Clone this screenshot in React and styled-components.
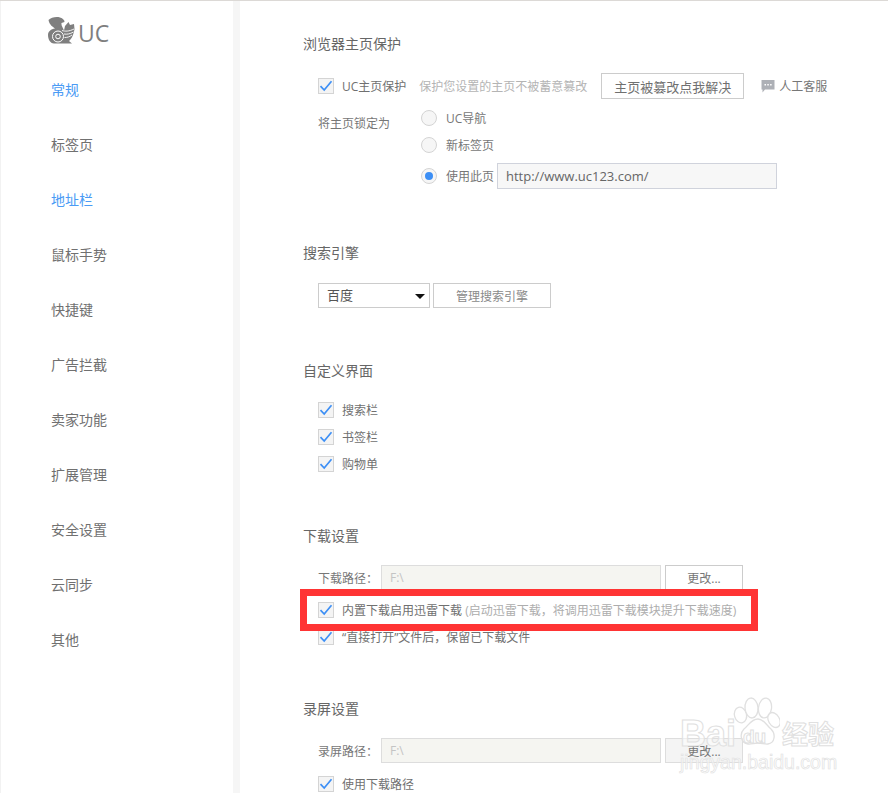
import React from 'react';
import styled, { createGlobalStyle } from 'styled-components';

const NAV = [
  { label: '常规', active: true },
  { label: '标签页' },
  { label: '地址栏', active: true },
  { label: '鼠标手势' },
  { label: '快捷键' },
  { label: '广告拦截' },
  { label: '卖家功能' },
  { label: '扩展管理' },
  { label: '安全设置' },
  { label: '云同步' },
  { label: '其他' },
];

function Squirrel() {
  return (
    <svg width="27" height="27" viewBox="0 0 27 27" fill="#7f7f7f">
      <path d="M0.500 3C3 0.500 8-0.500 12 0.500C15 1.500 16.500 3 16.500 5L13.500 6C13 8.500 15 11 16 13.500L17 9L20.500 5L22 8L26 7L26.500 12C26 16 24 22 21 24L24 26.500L6 26.500C2 26.500 0 22 0 18C0 14.500 3 12 7 11.500C4.500 9.500 1.500 8 0.500 3z" />
      <circle cx="10" cy="19.500" r="5.500" fill="none" stroke="#fff" strokeWidth="1" />
      <circle cx="10" cy="19.500" r="2.300" fill="none" stroke="#fff" strokeWidth="1" />
      <path d="M14 13.500c3 1 7 1 12-1.500M16 17c3 0.500 6 0 9.500-2M16.500 20.500c2.500 0 5-0.500 7.500-2.500" fill="none" stroke="#fff" strokeWidth="0.900" />
    </svg>
  );
}

function ChatIcon() {
  return (
    <svg width="14" height="14" viewBox="0 0 14 14">
      <path d="M0.500 1h13v9.500H4L1.500 13.500V10.500h-1z" fill="#adb0b6" />
      <rect x="3.500" y="5" width="1.500" height="1.500" fill="#fff" />
      <rect x="6.300" y="5" width="1.500" height="1.500" fill="#fff" />
      <rect x="9.100" y="5" width="1.500" height="1.500" fill="#fff" />
    </svg>
  );
}

function Watermark() {
  return (
    <Mark>
      <MarkTop>
        <MarkBrand>Bai</MarkBrand>
        <PawSvg width="47" height="52" viewBox="0 0 47 52" fill="rgba(255,255,255,.55)" stroke="#e0e0e0" strokeWidth="1.300">
          <ellipse cx="7.500" cy="18" rx="6" ry="8" transform="rotate(-15 7.500 18)" />
          <ellipse cx="18.500" cy="11" rx="6.500" ry="10" transform="rotate(-5 18.500 11)" />
          <ellipse cx="32" cy="11" rx="6.500" ry="10" transform="rotate(8 32 11)" />
          <ellipse cx="41" cy="23" rx="5.500" ry="8" transform="rotate(-30 41 23)" />
          <path d="M25 22c6 0 8 6 13 10 5 5 4 14-3 15-3 0.500-6-1-10-1s-7 1.500-10 1c-7-1-9-10-4-15 5-4 7-10 14-10z" />
        </PawSvg>
        <MarkBrand $cjk>经验</MarkBrand>
      </MarkTop>
      <MarkDu>du</MarkDu>
      <MarkUrl>jingyan.baidu.com</MarkUrl>
    </Mark>
  );
}

function Check({ children }) {
  return (
    <CheckRow>
      <CheckBox>
        <svg width="14" height="12" viewBox="0 0 14 12" fill="none">
          <path d="M1.500 6.200 5.200 10 12.500 1.300" stroke="#3d8ff5" strokeWidth="1.700" />
        </svg>
      </CheckBox>
      <span>{children}</span>
    </CheckRow>
  );
}

function PathRow({ label, faded }) {
  return (
    <FieldRow>
      <FieldLabel>{label}</FieldLabel>
      <PathInput readOnly value="F:\" />
      <ChangeButton $faded={faded}>更改...</ChangeButton>
    </FieldRow>
  );
}

export default function App() {
  return (
    <>
      <GlobalStyle />
      <Page>
        <Sidebar>
          <Logo>
            <Squirrel />
            <LogoText>UC</LogoText>
          </Logo>
          <Nav>
            {NAV.map(item => (
              <NavItem key={item.label} $active={item.active}>
                {item.label}
              </NavItem>
            ))}
          </Nav>
        </Sidebar>

        <Main>
          <Section $height={209}>
            <Heading>浏览器主页保护</Heading>
            <ProtectRow>
              <Check>UC主页保护</Check>
              <Hint>保护您设置的主页不被蓄意篡改</Hint>
              <FixButton>主页被篡改点我解决</FixButton>
              <Service>
                <ChatIcon />
                人工客服
              </Service>
            </ProtectRow>
            <LockRow>
              <LockLabel>将主页锁定为</LockLabel>
              <Radios>
                <RadioRow>
                  <Radio />
                  <span>UC导航</span>
                </RadioRow>
                <RadioRow>
                  <Radio />
                  <span>新标签页</span>
                </RadioRow>
                <RadioRow $tall>
                  <Radio $on />
                  <span>使用此页</span>
                  <UrlInput readOnly value="http://www.uc123.com/" />
                </RadioRow>
              </Radios>
            </LockRow>
          </Section>

          <Section $height={118}>
            <Heading>搜索引擎</Heading>
            <EngineRow>
              <EngineSelect>
                百度
                <Arrow />
              </EngineSelect>
              <EngineButton>管理搜索引擎</EngineButton>
            </EngineRow>
          </Section>

          <Section $height={165}>
            <Heading>自定义界面</Heading>
            <CheckList $top={15}>
              <Check>搜索栏</Check>
              <Check>书签栏</Check>
              <Check>购物单</Check>
            </CheckList>
          </Section>

          <Section $height={173}>
            <Heading>下载设置</Heading>
            <PathRow label="下载路径：" />
            <CheckList $top={6}>
              <Check>
                内置下载启用迅雷下载 <Aside>(启动迅雷下载，将调用迅雷下载模块提升下载速度)</Aside>
              </Check>
              <Check>“直接打开”文件后，保留已下载文件</Check>
            </CheckList>
          </Section>

          <Section>
            <Heading>录屏设置</Heading>
            <PathRow label="录屏路径：" faded />
            <CheckList $top={7}>
              <Check>使用下载路径</Check>
            </CheckList>
          </Section>
        </Main>
      </Page>
      <RedBox />
      <Watermark />
    </>
  );
}

const FONT = `"Open Sans", "Noto Sans CJK SC", sans-serif`;

const GlobalStyle = createGlobalStyle`
  html, body {
    margin: 0;
    height: 793px;
    overflow: hidden;
    background: #fff;
    font-family: ${FONT};
    color: #666;
  }
  * { box-sizing: border-box; }
`;

const Page = styled.div`
  display: flex;
  height: 793px;
  overflow: hidden;
  border-top: 1px solid #dcd9d6;
`;

const Sidebar = styled.aside`
  width: 240px;
  flex: none;
  border-left: 1px solid #f2f2f2;
  border-right: 7px solid #f6f6f6;
  padding: 15px 0 0 47px;
`;

const Logo = styled.div`
  display: flex;
  align-items: flex-end;
  gap: 3px;
  height: 28px;
`;

const LogoText = styled.span`
  font-size: 23px;
  line-height: 21px;
  font-weight: 500;
  color: #7f7f7f;
`;

const Nav = styled.nav`
  display: flex;
  flex-direction: column;
  margin: 18px 0 0 3px;
`;

const NavItem = styled.div`
  height: 55px;
  line-height: 55px;
  font-size: 14px;
  color: ${p => (p.$active ? '#4a9bf5' : '#707070')};
`;

const Main = styled.main`
  flex: 1;
  padding: 33px 0 0 63px;
`;

const Section = styled.section`
  height: ${p => (p.$height ? `${p.$height}px` : 'auto')};
`;

const Heading = styled.h2`
  margin: 0;
  height: 20px;
  font-size: 14px;
  line-height: 20px;
  font-weight: 400;
  color: #666;
`;

const ProtectRow = styled.div`
  display: flex;
  align-items: center;
  height: 26px;
  margin: 19px 0 0 15px;
  font-size: 12px;
`;

const Hint = styled.span`
  margin-left: 13px;
  width: 182px;
  color: #b4b4b4;
`;

const FixButton = styled.button`
  width: 143px;
  height: 26px;
  padding: 0;
  background: #fff;
  border: 1px solid #ccc;
  font: 13px ${FONT};
  color: #707070;
`;

const Service = styled.span`
  display: flex;
  align-items: center;
  gap: 4px;
  margin-left: 17px;
  color: #777;
`;

const LockRow = styled.div`
  display: flex;
  margin: 5px 0 0 15px;
  font-size: 12px;
`;

const LockLabel = styled.span`
  width: 103px;
  padding-top: 10px;
  line-height: 20px;
  color: #777;
`;

const Radios = styled.div`
  display: flex;
  flex-direction: column;
`;

const RadioRow = styled.label`
  display: flex;
  align-items: center;
  gap: 9px;
  height: ${p => (p.$tall ? '33px' : '27px')};
  color: #777;
  padding-top: ${p => (p.$tall ? '3px' : '0')};
`;

const Radio = styled.span`
  position: relative;
  width: 16px;
  height: 16px;
  border-radius: 50%;
  background: #f6f6f6;
  border: 1px solid #d4d4d4;

  &::after {
    content: '';
    display: ${p => (p.$on ? 'block' : 'none')};
    position: absolute;
    inset: 3px;
    border-radius: 50%;
    background: #3d8ff5;
  }
`;

const UrlInput = styled.input`
  width: 280px;
  height: 26px;
  margin-left: -6px;
  padding: 0 8px;
  background: #f7f7f7;
  border: 1px solid #d0d3dc;
  font: 13px ${FONT};
  color: #666;
`;

const EngineRow = styled.div`
  display: flex;
  gap: 3px;
  margin: 20px 0 0 15px;
`;

const EngineSelect = styled.div`
  position: relative;
  width: 112px;
  height: 25px;
  padding-left: 8px;
  border: 1px solid #ccc;
  font-size: 13px;
  line-height: 23px;
  color: #555;
`;

const Arrow = styled.i`
  position: absolute;
  right: 4px;
  top: 10px;
  border: 5px solid transparent;
  border-top: 5px solid #111;
  border-bottom: 0;
`;

const EngineButton = styled.button`
  width: 118px;
  height: 25px;
  padding: 0;
  background: #fff;
  border: 1px solid #ccc;
  font: 12px ${FONT};
  color: #8a8a8a;
`;

const CheckList = styled.div`
  display: flex;
  flex-direction: column;
  margin: ${p => p.$top}px 0 0 15px;
`;

const CheckRow = styled.label`
  display: flex;
  align-items: center;
  gap: 8px;
  height: 27px;
  font-size: 12px;
  color: #707070;
  white-space: nowrap;
`;

const CheckBox = styled.span`
  display: flex;
  align-items: center;
  justify-content: center;
  width: 16px;
  height: 16px;
  flex: none;
  background: #f4f4f4;
  border: 1px solid #d4d4d4;
`;

const Aside = styled.span`
  color: #adadad;
`;

const FieldRow = styled.div`
  display: flex;
  align-items: center;
  height: 25px;
  margin: 19px 0 0 15px;
  font-size: 12px;
`;

const FieldLabel = styled.span`
  width: 63px;
  color: #777;
`;

const PathInput = styled.input`
  width: 280px;
  height: 25px;
  padding: 0 8px;
  background: #f5f5f1;
  border: 1px solid #ddd;
  font: 12px ${FONT};
  color: #c4c4c4;
`;

const ChangeButton = styled.button`
  width: 78px;
  height: 25px;
  margin-left: 4px;
  padding: 0;
  background: ${p => (p.$faded ? '#f4f4f4' : '#fff')};
  border: 1px solid ${p => (p.$faded ? '#ddd' : '#ccc')};
  font: 12px ${FONT};
  color: #777;
`;

const RedBox = styled.div`
  position: absolute;
  left: 300px;
  top: 589px;
  width: 458px;
  height: 42px;
  border: 7px solid #ff3434;
`;

const Mark = styled.div`
  position: absolute;
  left: 680px;
  top: 697px;
  width: 170px;
  pointer-events: none;
`;

const MarkTop = styled.div`
  display: flex;
  align-items: flex-end;
  height: 52px;
`;

const PawSvg = styled.svg`
  flex: none;
  margin-left: -3px;
`;

const MarkBrand = styled.span`
  font: 700 ${p => (p.$cjk ? '26px' : '36px')} "Liberation Sans", "Noto Sans CJK SC", sans-serif;
  line-height: ${p => (p.$cjk ? '28px' : '30px')};
  color: rgba(255, 255, 255, 0.5);
  -webkit-text-stroke: 1px #e0e0e0;
  margin-left: ${p => (p.$cjk ? '2px' : '0')};
`;

const MarkDu = styled.span`
  position: absolute;
  left: 63px;
  top: 29px;
  font: 700 19px "Liberation Sans", sans-serif;
  color: #fff;
  -webkit-text-stroke: 1px #e0e0e0;
`;

const MarkUrl = styled.div`
  margin-top: 2px;
  font: 400 19.500px/22px "Liberation Sans", sans-serif;
  color: rgba(255, 255, 255, 0.6);
  -webkit-text-stroke: 0.7px #e2e2e2;
  white-space: nowrap;
`;
